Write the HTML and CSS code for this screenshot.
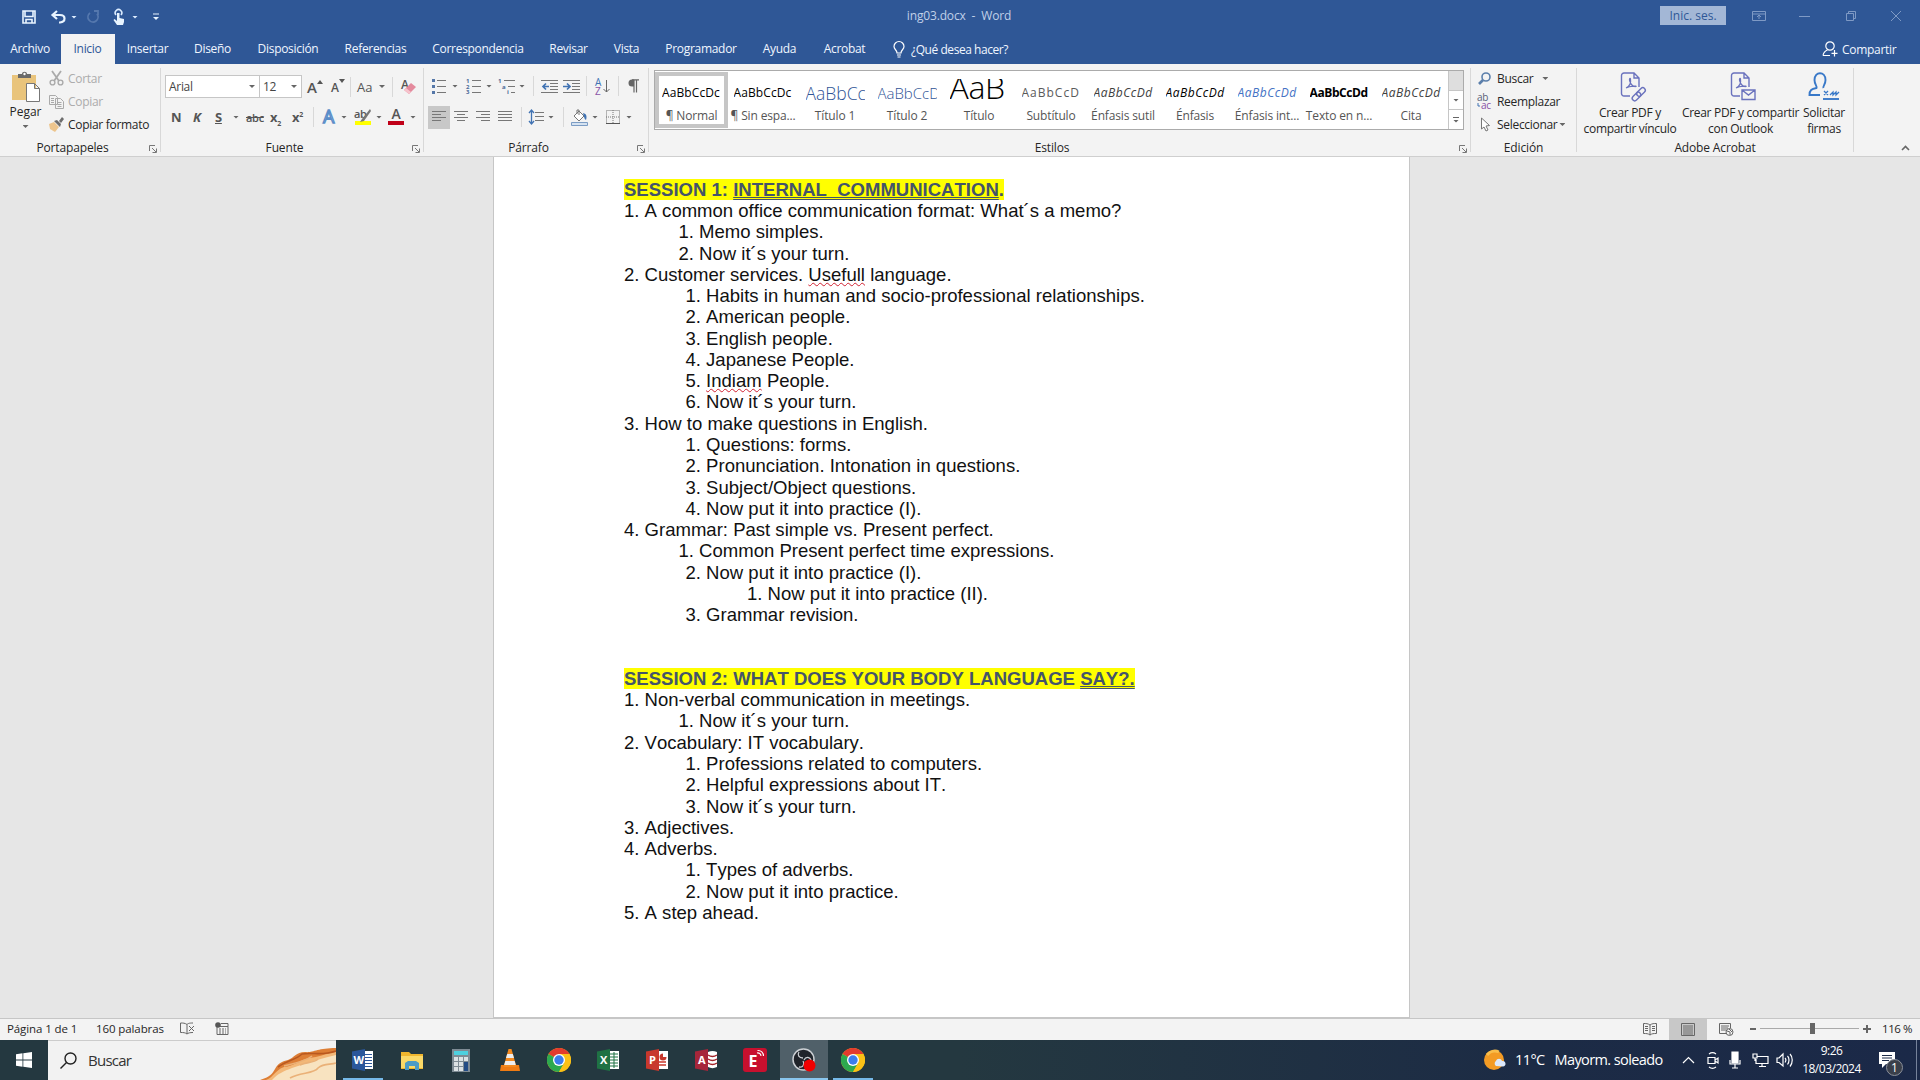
FILE: index.html
```html
<!DOCTYPE html>
<html lang="es">
<head>
    <meta charset="UTF-8">
    <meta name="viewport" content="width=device-width, initial-scale=1.0">
    <title>ing03.docx - Word</title>
    <link rel="stylesheet" href="styles.css">
</head>
<body>
    <svg class="defs" width="0" height="0">
        <symbol id="launcher" viewBox="0 0 8 8"><path d="M.5 6V.5H6M3 3l4 4M7.500 3.500v4h-4" fill="none" stroke="#777"/></symbol>
        <symbol id="chrome" viewBox="0 0 24 24">
            <circle cx="12" cy="12" r="12" fill="#fbc116"/>
            <path d="M12 12L1.600 6A12 12 0 0 1 22.400 6z" fill="#e33b2e"/>
            <path d="M12 12L1.600 6A12 12 0 0 0 12 24l5.200-9z" fill="#2da94f"/>
            <path d="M12 6h10.400A12 12 0 0 1 12 24l5.200-9z" fill="#fbc116"/>
            <circle cx="12" cy="12" r="6" fill="#fff"/><circle cx="12" cy="12" r="4.700" fill="#3b7ded"/>
        </symbol>
        <symbol id="pdf" viewBox="0 0 26 29">
            <path d="M10 24H4a2.500 2.500 0 0 1-2.500-2.500v-18A2.500 2.500 0 0 1 4 1h10l5 5v9M14 1v5h5" fill="none" stroke="#6a72bd" stroke-width="1.400"/>
            <path d="M6 16c4-2 5-6 4.500-9-.5-1.500-1.500 0-.8 2 1.300 4 3.300 6 6.300 5.500 1-.6-5-1-10 1.500z" fill="none" stroke="#6a72bd" stroke-width="1.200"/>
        </symbol>
    </svg>

    <header class="titlebar">
        <div class="quick">
            <svg width="14" height="14" viewBox="0 0 14 14"><path d="M1 1h12v12H1zM3 1.500v5h8v-5M4 13V9.500h6V13" fill="none" stroke="#e8f4ff" stroke-width="1.600"/></svg>
            <svg width="15" height="14" viewBox="0 0 15 14"><path d="M6 1L1.500 5 6 9M2 5h7c6 0 6 7 0 7.500H8" fill="none" stroke="#e8f4ff" stroke-width="2.200"/></svg>
            <i class="caret"></i>
            <svg width="14" height="14" viewBox="0 0 14 14"><path d="M4 3a5 5 0 1 0 7 1M8 1h4v4" fill="none" stroke="#5578ae" stroke-width="1.800"/></svg>
            <svg width="12" height="16" viewBox="0 0 12 16"><path d="M3 6a3.300 3.300 0 1 1 5 0" fill="none" stroke="#dcecff" stroke-width="1.500"/><path d="M4 4h2.500v5l4.500 1v3l-1 3H4L.500 11l1-1L4 12z" fill="#e8f4ff"/></svg>
            <i class="caret"></i>
            <svg width="6" height="8" viewBox="0 0 6 8"><path d="M0 1h6" stroke="#e8f4ff"/><path d="M0 4h6L3 7z" fill="#e8f4ff"/></svg>
        </div>
        <div class="doc-title">ing03.docx&nbsp; - &nbsp;Word</div>
        <div class="window-buttons">
            <button class="login">Inic. ses.</button>
            <svg width="14" height="12" viewBox="0 0 14 12"><path d="M.5 1.500h13v9H.5zM.5 4h13M7 9V5M5 7l2-2 2 2" /></svg>
            <svg width="12" height="12" viewBox="0 0 12 12"><path d="M0 6.500h11"/></svg>
            <svg width="12" height="12" viewBox="0 0 12 12"><path d="M1.500 3.500h7v7h-7zM3.500 3V1.500h7v7H9"/></svg>
            <svg width="12" height="12" viewBox="0 0 12 12"><path d="M1 1l10 10M11 1L1 11"/></svg>
        </div>
    </header>

    <nav class="tabs">
        <a>Archivo</a>
        <a class="active">Inicio</a>
        <a>Insertar</a>
        <a>Diseño</a>
        <a>Disposición</a>
        <a>Referencias</a>
        <a>Correspondencia</a>
        <a>Revisar</a>
        <a>Vista</a>
        <a>Programador</a>
        <a>Ayuda</a>
        <a>Acrobat</a>
        <div class="tell-me">
            <svg width="12" height="17" viewBox="0 0 12 17"><path d="M4 12c0-3-3-3.500-3-6.500a5 5 0 0 1 10 0c0 3-3 3.500-3 6.500zM4 14h4M4.500 16h3" fill="none" stroke="#fff" stroke-width="1.200"/></svg>
            <span>¿Qué desea hacer?</span>
        </div>
        <div class="share">
            <svg width="16" height="16" viewBox="0 0 16 16"><circle cx="8" cy="5" r="4.200"/><path d="M1 14.500c.5-3 2-4.500 4.500-5.500M1 14.500h7M12.500 9v6.500M9.500 12.300h6"/></svg>
            <span>Compartir</span>
        </div>
    </nav>

    <section class="ribbon">
        <div class="group clipboard">
            <div class="group-body">
                <div class="paste">
                    <svg width="30" height="31" viewBox="0 0 30 31"><path d="M1 4h24v25H1z" fill="#e9c47c"/><path d="M7 7V3h4c0-3 5-3 5 0h4v4z" fill="#6a6a6a"/><circle cx="13.500" cy="3" r="1.200" fill="#fff"/><path d="M15.500 12.500h8l5 5v13h-13zM23.500 12.500v5h5" fill="#fff" stroke="#777"/></svg>
                    <span>Pegar</span>
                    <i class="caret"></i>
                </div>
                <ul class="commands">
                    <li class="off"><svg width="15" height="15" viewBox="0 0 15 15"><path d="M3 0l7 10M12 0L5 10" stroke="#aaa" stroke-width="1.800"/><circle cx="3.500" cy="11.500" r="2.400" fill="none" stroke="#aaa" stroke-width="1.400"/><circle cx="11.500" cy="11.500" r="2.400" fill="none" stroke="#aaa" stroke-width="1.400"/></svg><span>Cortar</span></li>
                    <li class="off"><svg width="15" height="15" viewBox="0 0 15 15"><path d="M.5 1.500h6l2 2v7h-8zM6.500 4.500h5l3 3v7h-8zM2 4.500h3M2 6.500h3M2 8.500h3M8.500 8.500h4M8.500 10.500h4M8.500 12.500h4" fill="#f3f3f3" stroke="#aaa"/></svg><span>Copiar</span></li>
                    <li><svg width="15" height="15" viewBox="0 0 15 15"><path d="M0 7l5-2 5 5-4 5-5-3z" fill="#edc58d"/><path d="M5 4l3-1 4 4-1 3zM10 4l3-4 2 2-3 4z" fill="#6d6d6d"/></svg><span>Copiar formato</span></li>
                </ul>
            </div>
            <div class="group-label">Portapapeles<svg width="8" height="8"><use href="#launcher"/></svg></div>
        </div>

        <div class="group font">
            <div class="group-body">
                <div class="tools font-top">
                    <div class="combo">Arial<i class="caret"></i></div>
                    <div class="combo">12<i class="caret"></i></div>
                    <b class="grow">A<svg width="6" height="4"><path d="M0 4h6L3 0z"/></svg></b>
                    <b class="grow shrink">A<svg width="6" height="4"><path d="M0 0h6L3 4z"/></svg></b>
                    <i class="sep"></i>
                    <span class="case">Aa</span><i class="caret"></i>
                    <i class="sep"></i>
                    <svg width="16" height="16" viewBox="0 0 16 16"><text x="0" y="10" class="letter" font-size="12">A</text><path d="M3 11l7-7 5 4-7 7z" fill="#e48a9d"/><path d="M3 11l2-2 5 4-2 2z" fill="#f6c3cc"/></svg>
                </div>
                <div class="tools font-bottom">
                    <b>N</b><b class="italic">K</b><b class="underlined">S</b><i class="caret"></i>
                    <span class="strike">abc</span>
                    <b>x<sub>2</sub></b><b>x<sup>2</sup></b>
                    <i class="sep"></i>
                    <svg width="15" height="16" viewBox="0 0 15 16"><text x="1" y="14" font-size="18" fill="#fff" stroke="#5b8dc8" stroke-width="1.300">A</text></svg><i class="caret"></i>
                    <svg width="18" height="18" viewBox="0 0 18 18"><path d="M1 13h16v4H1z" fill="#ff0"/><text x="0" y="10" class="letter" font-size="11">ab</text><path d="M16 1L8 11l-2 3 4-1 7-10z" fill="#777"/></svg><i class="caret"></i>
                    <svg width="17" height="18" viewBox="0 0 17 18"><path d="M0 13h16v4H0z" fill="#c00018"/><text x="3.500" y="11" class="letter" font-size="14">A</text></svg><i class="caret"></i>
                </div>
            </div>
            <div class="group-label">Fuente<svg width="8" height="8"><use href="#launcher"/></svg></div>
        </div>

        <div class="group paragraph">
            <div class="group-body">
                <div class="tools para-top">
                    <svg width="14" height="16" viewBox="0 0 14 16"><path d="M5 2.500h9M5 8.500h9M5 14.500h9" class="line"/><path d="M0 1h3v3H0zM0 7h3v3H0zM0 13h3v3H0z" fill="#5577a8"/></svg><i class="caret"></i>
                    <svg width="15" height="16" viewBox="0 0 15 16"><path d="M6 2.500h9M6 8.500h9M6 14.500h9" class="line"/><g class="nums"><text y="5">1</text><text y="10.500">2</text><text y="16">3</text></g></svg><i class="caret"></i>
                    <svg width="17" height="16" viewBox="0 0 17 16"><path d="M6 2.500h11M10 8.500h7M13 14.500h4" class="line"/><g class="nums"><text y="5">1</text><text x="4" y="10.500">a</text><text x="9" y="16">i</text></g></svg><i class="caret"></i>
                    <i class="sep"></i>
                    <svg width="17" height="14" viewBox="0 0 17 14"><path d="M0 1.500h17M9 4.500h8M9 7.500h8M9 10.500h8M0 13.500h17" class="line"/><path d="M8 7.500H2M5 4.500l-3 3 3 3" stroke="#4173b3" stroke-width="1.700" fill="none"/></svg>
                    <svg width="17" height="14" viewBox="0 0 17 14"><path d="M0 1.500h17M9 4.500h8M9 7.500h8M9 10.500h8M0 13.500h17" class="line"/><path d="M0 7.500h6M4 4.500l3 3-3 3" stroke="#4173b3" stroke-width="1.700" fill="none"/></svg>
                    <i class="sep"></i>
                    <svg width="15" height="17" viewBox="0 0 15 17"><text x="0" y="8" font-size="10" fill="#4173b3">A</text><text x="0" y="17" font-size="10" fill="#8a55a8">Z</text><path d="M11.500 2v12M8.500 11l3 3 3-3" fill="none" stroke="#666"/></svg>
                    <i class="sep"></i>
                    <svg width="11" height="14" viewBox="0 0 11 14"><path d="M6 13.500V1M8.500 13.500V1M4 .800h7" stroke="#666" stroke-width="1.200"/><path d="M6 .500H4a3.500 3.500 0 0 0 0 7h2z" fill="#666"/></svg>
                </div>
                <div class="tools para-bottom">
                    <span class="pressed"><svg width="15" height="14" viewBox="0 0 15 14"><path d="M0 1.500h14M0 4.500h9M0 7.500h14M0 10.500h9" class="line"/></svg></span>
                    <svg width="15" height="14" viewBox="0 0 15 14"><path d="M0 1.500h14M3 4.500h8M0 7.500h14M3 10.500h8" class="line"/></svg>
                    <svg width="15" height="14" viewBox="0 0 15 14"><path d="M0 1.500h14M5 4.500h9M0 7.500h14M5 10.500h9" class="line"/></svg>
                    <svg width="15" height="14" viewBox="0 0 15 14"><path d="M0 1.500h14M0 4.500h14M0 7.500h14M0 10.500h14" class="line"/></svg>
                    <i class="sep"></i>
                    <svg width="15" height="16" viewBox="0 0 15 16"><path d="M6 3.500h9M6 7.500h9M6 11.500h9" class="line"/><path d="M2.500 1v14M0 4l2.500-3L5 4M0 12l2.500 3L5 12" stroke="#4173b3" fill="none" stroke-width="1.300"/></svg><i class="caret"></i>
                    <i class="sep"></i>
                    <svg width="17" height="17" viewBox="0 0 17 17"><path d="M3 7l5-5 5 5-5 5zM6 5V1h2v5" fill="#fff" stroke="#777"/><path d="M12 4c4 1 4 4 3 7-2-1-2-4-3-7z" fill="#4173b3"/><path d="M.5 13.500h16v3H.5z" fill="#d5e2f0" stroke="#7b9cc4"/></svg><i class="caret"></i>
                    <svg width="14" height="14" viewBox="0 0 14 14"><path d="M.5.5h13v13H.5zM7 0v14M0 7h14" fill="none" stroke="#777" stroke-dasharray="1 1"/><path d="M0 13.500h14" stroke="#555"/></svg><i class="caret"></i>
                </div>
            </div>
            <div class="group-label">Párrafo<svg width="8" height="8"><use href="#launcher"/></svg></div>
        </div>

        <div class="group styles">
            <div class="group-body">
                <div class="gallery">
                    <div class="style selected"><div class="preview">AaBbCcDc</div><span>¶ Normal</span></div>
                    <div class="style"><div class="preview">AaBbCcDc</div><span>¶ Sin espa...</span></div>
                    <div class="style"><div class="preview heading1">AaBbCc</div><span>Título 1</span></div>
                    <div class="style"><div class="preview heading2">AaBbCcD</div><span>Título 2</span></div>
                    <div class="style"><div class="preview title">AaB</div><span>Título</span></div>
                    <div class="style"><div class="preview subtitle">AaBbCcD</div><span>Subtítulo</span></div>
                    <div class="style"><div class="preview subtle">AaBbCcDd</div><span>Énfasis sutil</span></div>
                    <div class="style"><div class="preview emphasis">AaBbCcDd</div><span>Énfasis</span></div>
                    <div class="style"><div class="preview intense">AaBbCcDd</div><span>Énfasis int...</span></div>
                    <div class="style"><div class="preview strong">AaBbCcDd</div><span>Texto en n...</span></div>
                    <div class="style"><div class="preview subtle">AaBbCcDd</div><span>Cita</span></div>
                    <div class="gallery-scroll"><div class="off"></div><div><i class="caret"></i></div><div class="more"><i class="caret"></i></div></div>
                </div>
            </div>
            <div class="group-label">Estilos<svg width="8" height="8"><use href="#launcher"/></svg></div>
        </div>

        <div class="group editing">
            <div class="group-body">
                <ul class="commands">
                    <li><svg width="16" height="14" viewBox="0 0 16 14"><circle cx="9" cy="5" r="4" fill="none" stroke="#5b7fab" stroke-width="1.600"/><path d="M6 8l-4 4" stroke="#5b7fab" stroke-width="2.600"/></svg><span>Buscar</span><i class="caret"></i></li>
                    <li><svg width="16" height="16" viewBox="0 0 16 16"><text x="0" y="7" font-size="10" fill="#5a5f78">ab</text><text x="4" y="15" font-size="10" fill="#8a4fa5">ac</text><path d="M1 9v3h2" fill="none" stroke="#4173b3"/></svg><span>Reemplazar</span></li>
                    <li><svg width="16" height="15" viewBox="0 0 16 15"><path d="M4.500 1v11l2.500-2 2 4 2-1-2-4 3.500-.5z" fill="#fff" stroke="#777"/></svg><span>Seleccionar</span><i class="caret near"></i></li>
                </ul>
            </div>
            <div class="group-label">Edición</div>
        </div>

        <div class="group acrobat">
            <div class="group-body">
                <div class="big shifted"><svg width="26" height="29" viewBox="0 0 26 29"><use href="#pdf"/><g fill="none" stroke="#6a72bd" stroke-width="1.400"><rect x="16" y="17.500" width="10" height="5" rx="2.500" transform="rotate(-45 21 20)"/><rect x="11.500" y="22" width="10" height="5" rx="2.500" transform="rotate(-45 16.500 24.500)"/></g></svg><span>Crear PDF y<br>compartir vínculo</span></div>
                <div class="big shifted"><svg width="26" height="29" viewBox="0 0 26 29"><use href="#pdf"/><path d="M12 18h13v9.500H12zM12 18l6.500 5 6.500-5" fill="#f3f3f3" stroke="#6a72bd" stroke-width="1.400"/></svg><span>Crear PDF y compartir<br>con Outlook</span></div>
                <div class="big"><svg width="32" height="29" viewBox="0 0 32 29"><path d="M12 23H1.500c0-5 2-6 7-7 1-2-2-3-2-8 0-9 11-9 11 0 0 5-3 6-2 8" fill="none" stroke="#3878c8" stroke-width="1.900"/><path d="M16 19l4 4M20 19l-4 4M22 23l3-3v3l3-3v3l3-3" fill="none" stroke="#3878c8" stroke-width="1.300"/><path d="M15 27h16" stroke="#3878c8" stroke-width="1.900"/></svg><span>Solicitar<br>firmas</span></div>
            </div>
            <div class="group-label">Adobe Acrobat</div>
        </div>
        <svg class="collapse" width="9" height="6" viewBox="0 0 9 6"><path d="M1 5l3.500-3.500L8 5" fill="none" stroke="#666" stroke-width="1.600"/></svg>
    </section>

    <main class="workspace">
        <article class="page">
            <h1>SESSION 1: <u>INTERNAL&nbsp; COMMUNICATION</u>.</h1>
            <p>1. A common office communication format: What´s a memo?</p>
            <p class="near">1. Memo simples.</p>
            <p class="near">2. Now it´s your turn.</p>
            <p>2. Customer services. <span class="typo">Usefull</span> language.</p>
            <p class="sub">1. Habits in human and socio-professional relationships.</p>
            <p class="sub">2. American people.</p>
            <p class="sub">3. English people.</p>
            <p class="sub">4. Japanese People.</p>
            <p class="sub">5. <span class="typo">Indiam</span> People.</p>
            <p class="sub">6. Now it´s your turn.</p>
            <p>3. How to make questions in English.</p>
            <p class="sub">1. Questions: forms.</p>
            <p class="sub">2. Pronunciation. Intonation in questions.</p>
            <p class="sub">3. Subject/Object questions.</p>
            <p class="sub">4. Now put it into practice (I).</p>
            <p>4. Grammar: Past simple vs. Present perfect.</p>
            <p class="near">1. Common Present perfect time expressions.</p>
            <p class="sub">2. Now put it into practice (I).</p>
            <p class="deep">1. Now put it into practice (II).</p>
            <p class="sub">3. Grammar revision.</p>
            <p>&nbsp;</p>
            <p>&nbsp;</p>
            <h1>SESSION 2: WHAT DOES YOUR BODY LANGUAGE <u>SAY?.</u></h1>
            <p>1. Non-verbal communication in meetings.</p>
            <p class="near">1. Now it´s your turn.</p>
            <p>2. Vocabulary: IT vocabulary.</p>
            <p class="sub">1. Professions related to computers.</p>
            <p class="sub">2. Helpful expressions about IT.</p>
            <p class="sub">3. Now it´s your turn.</p>
            <p>3. Adjectives.</p>
            <p>4. Adverbs.</p>
            <p class="sub">1. Types of adverbs.</p>
            <p class="sub">2. Now put it into practice.</p>
            <p>5. A step ahead.</p>
        </article>
    </main>

    <footer class="statusbar">
        <span class="pages">Página 1 de 1</span>
        <span class="words">160 palabras</span>
        <svg width="15" height="13" viewBox="0 0 15 13"><path d="M7 2.500C5 1 3 1 .500 1v9.500c3 0 4.500 0 6.500 1.500V2.500C8 1.500 9 1 13 1M7 12c1-1 3-1.500 6-1.500M9 4l5 5M14 4L9 9" fill="none" stroke="#666"/></svg>
        <svg width="14" height="13" viewBox="0 0 14 13"><path d="M2 4.500h11v8H2zM6 1.500h7v3" fill="none" stroke="#666"/><circle cx="3" cy="3" r="2.800" fill="#555"/><path d="M4 7h7M4 9h7M4 11h7" stroke="#666" stroke-dasharray="2 1"/></svg>
        <div class="views">
            <span><svg width="14" height="13" viewBox="0 0 14 13"><path d="M7 2C5 .500 3 .500.500.500v10c3 0 4.500 0 6.500 1.500 2-1.500 3.500-1.500 6.500-1.500v-10C11 .500 9 .500 7 2zv10M2 3.500h3M2 5.500h3M2 7.500h3M9 3.500h3M9 5.500h3M9 7.500h3" fill="none" stroke="#666"/></svg></span>
            <span class="pressed"><svg width="14" height="13" viewBox="0 0 14 13"><path d="M.5.5h13v12H.5zM2 3h10M2 5h10M2 7h10M2 9h10M2 11h10" fill="none" stroke="#666"/></svg></span>
            <span><svg width="15" height="13" viewBox="0 0 15 13"><path d="M7 10.500H.500v-10h11v5M2 3h8M2 5h7M2 7h5" fill="none" stroke="#666"/><circle cx="10.500" cy="9" r="3.500" fill="#f3f3f3" stroke="#666"/><path d="M8 8l3 1v3M10 6l3 3" stroke="#666" fill="none"/></svg></span>
        </div>
        <div class="zoom"><i class="minus"></i><div class="track"><i></i></div><i class="plus"></i></div>
        <span class="percent">116 %</span>
    </footer>

    <div class="taskbar">
        <div class="start"><svg width="16" height="16" viewBox="0 0 16 16"><path d="M0 2.200l6.500-.9v6.300H0zM7.300 1.200L16 0v7.600H7.300zM0 8.400h6.500v6.300L0 13.800zM7.300 8.400H16V16l-8.700-1.200z" fill="#fff"/></svg></div>
        <div class="search">
            <svg width="17" height="17" viewBox="0 0 17 17"><circle cx="10.500" cy="6.500" r="5.500" fill="none" stroke="#222" stroke-width="1.400"/><path d="M6.500 10.500L.500 16.500" stroke="#222" stroke-width="1.400"/></svg>
            <span>Buscar</span>
            <svg class="pastry" width="80" height="39" viewBox="0 0 80 39">
                <path d="M4 39c10-3 12-6 15-11 3-6 8-8 13-9 6-2 8-8 17-8 8 1 12-4 31-4v32z" fill="#dd7e35"/>
                <path d="M10 39c8-3 9-10 18-13 10-1 16-7 25-9 10-1 15-4 27-6v28z" fill="#f3b878"/>
                <path d="M16 39c5-6 12-9 20-12 12-4 24-8 44-13v25z" fill="#f8e3c0"/>
                <path d="M22 26c9-7 18-7 24-13 10-2 20 2 34-3" fill="none" stroke="#b9581f" stroke-width="1.600"/>
                <path d="M34 37c10-6 24-4 28-10 6-5 12-3 18-5M44 24c6-3 14-2 18-6M28 25c12-3 22-5 28-10" fill="none" stroke="#eab178" stroke-width="1.600"/>
            </svg>
        </div>
        <div class="apps">
            <div class="open"><svg width="22" height="22" viewBox="0 0 22 22"><path d="M12 2h9v18h-9z" fill="#fff"/><path d="M13 5.500h7M13 8.500h7M13 11.500h7M13 14.500h7M13 17.500h7" stroke="#2b579a"/><path d="M0 2.500L13 0v22L0 19.500z" fill="#2b579a"/><text x="1.500" y="15" font-size="11">W</text></svg></div>
            <div><svg width="22" height="20" viewBox="0 0 22 20"><path d="M0 2h8l2 2h12v15H0z" fill="#f0b62e"/><path d="M0 6h22v12H0z" fill="#fbd968"/><path d="M4 20v-7l3-2h8l3 2v7h-4v-4H8v4z" fill="#4c9bc6"/></svg></div>
            <div><svg width="18" height="23" viewBox="0 0 18 23"><path d="M0 0h18v23H0z" fill="#7e8b94"/><path d="M2 2h14v4H2z" fill="#4ed0df"/><path d="M2 8h4v4H2zM7 8h4v4H7zM12 8h4v4h-4zM2 13h4v4H2zM7 13h4v4H7zM2 18h4v4H2zM7 18h4v4H7z" fill="#dce2e5"/><path d="M12 13h4v9h-4z" fill="#234c85"/></svg></div>
            <div><svg width="20" height="22" viewBox="0 0 20 22"><path d="M1 16h18l1 6H0z" fill="#ef7b13"/><path d="M8.500 0h3l5 18h-13z" fill="#f58a1f"/><path d="M7.200 5h5.600l1.200 4H6zM5.300 12h9.400l1 4H4.200z" fill="#eee"/></svg></div>
            <div><svg width="24" height="24"><use href="#chrome"/></svg></div>
            <div><svg width="23" height="22" viewBox="0 0 23 22"><path d="M12 2h10v18H12z" fill="#fff"/><path d="M13 5h8M13 8h8M13 11h8M13 14h8M13 17h8M17 3v16" stroke="#1f7244"/><path d="M0 2.500L13 0v22L0 19.500z" fill="#1f7244"/><text x="3" y="15" font-size="11">X</text></svg></div>
            <div><svg width="23" height="22" viewBox="0 0 23 22"><path d="M12 2h10v18H12z" fill="#fff"/><path d="M13 13h7M13 16h7" stroke="#c8382d" stroke-width="1.500"/><circle cx="17" cy="8" r="3.500" fill="#c8382d"/><path d="M17 8V4h4v4z" fill="#fff"/><path d="M0 2.500L13 0v22L0 19.500z" fill="#c8382d"/><text x="3" y="15" font-size="11">P</text></svg></div>
            <div><svg width="23" height="22" viewBox="0 0 23 22"><path d="M13 3c3-1.500 6-1.500 9 0v15c-3 1.500-6 1.500-9 0z" fill="#fff"/><path d="M13 6c3 2 6 2 9 0M13 10c3 2 6 2 9 0M13 14c3 2 6 2 9 0" stroke="#a4262c" stroke-width="1.500" fill="none"/><path d="M0 2.500L13 0v22L0 19.500z" fill="#a6263a"/><text x="3" y="15" font-size="11">A</text></svg></div>
            <div><svg width="24" height="24" viewBox="0 0 24 24"><rect width="24" height="24" rx="3" fill="#c8102e"/><text x="5.500" y="19" font-size="16">E</text><path d="M14 5c2-.5 4 1 4 3M14.500 2.500C18 2 20.500 5 20.500 8" fill="none" stroke="#fff" stroke-width="1.100"/></svg></div>
            <div class="open current"><svg width="24" height="24" viewBox="0 0 24 24"><circle cx="11.500" cy="11.500" r="10.500" fill="#20242a" stroke="#ccd0d4" stroke-width="1.500"/><path d="M11 10c-4 0-6-3-4-6M12 12c2-4 6-3 7 0M11 13c2 3 0 7-4 6" fill="none" stroke="#ccd0d4" stroke-width="1.300"/><circle cx="17.500" cy="17.500" r="6" fill="#f00000"/></svg></div>
            <div class="open"><svg width="24" height="24"><use href="#chrome"/></svg></div>
        </div>
        <div class="weather">
            <svg width="22" height="21" viewBox="0 0 22 21"><circle cx="10" cy="10" r="10" fill="#f39b24"/><path d="M3 5a10 10 0 0 1 12-3" stroke="#f9bd4a" stroke-width="3" fill="none"/><path d="M12 16a3 3 0 0 1 0-5c1-3 5-3 6 0 4-1 5 5 1 5.500z" fill="#dce9fb"/></svg>
            <span class="degrees">11°C</span><span>Mayorm. soleado</span>
        </div>
        <div class="tray">
            <svg width="13" height="8" viewBox="0 0 13 8"><path d="M1 7l5.500-5.500L12 7"/></svg>
            <svg width="12" height="17" viewBox="0 0 12 17"><path d="M1 5.500h7v6H1zM8 8l3-2v5L8 9M2 2c2-1.500 5-1.500 7 0M2 15c2 1.500 5 1.500 7 0"/></svg>
            <svg width="12" height="17" viewBox="0 0 12 17"><path d="M3 0h6v11H3z" fill="#fff"/><path d="M1 8v4h10V8M6 12v4M3 16h6"/></svg>
            <svg width="17" height="15" viewBox="0 0 17 15"><path d="M5 3.500h11v7H4V6M10 10v4M7 13.500h7M1 1h4v4H1zM3 5v3"/></svg>
            <svg width="17" height="15" viewBox="0 0 17 15"><path d="M1 5h2l4-4v12L3 9.500H1zM9 5c1 1 1 3 0 4.500M11.500 3c2 2 2 6 0 8.500M14 1c3 3 3 9 0 12.500"/></svg>
        </div>
        <div class="clock"><span>9:26</span><span>18/03/2024</span></div>
        <div class="notifications">
            <svg width="16" height="16" viewBox="0 0 16 16"><path d="M0 0h16v12H7l-4 4v-4H0z" fill="#fff"/><path d="M3 3.500h10M3 6h10M3 8.500h7" stroke="#1c2b48"/></svg>
            <span class="badge">1</span>
        </div>
    </div>
</body>
</html>
```

FILE: styles.css
```css
/* styles.css */

* {
    box-sizing: border-box;
    margin: 0;
    padding: 0;
}

body {
    width: 1920px;
    height: 1080px;
    overflow: hidden;
    display: flex;
    flex-direction: column;
    font-family: "Open Sans", "Noto Sans", sans-serif;
    font-size: 12px;
    letter-spacing: -0.3px;
    color: #262626;
    background: #e6e6e6;
}

svg {
    display: block;
    flex: none;
    overflow: visible;
}

.defs { position: absolute; }

.caret {
    display: block;
    flex: none;
    width: 6px;
    height: 3px;
    background: #666;
    clip-path: polygon(0 0, 100% 0, 50% 100%);
}

/* Title bar */

.titlebar {
    height: 34px;
    flex: none;
    display: grid;
    grid-template-columns: 660px 598px 1fr;
    align-items: center;
    background: #2f5796;
    color: #c0d0e8;
}

.quick {
    display: grid;
    grid-template-columns: 29px 20px 15px 27px 19px 21px 6px;
    align-items: center;
    padding-left: 22px;
}

.quick .caret { background: #dcecff; }

.doc-title {
    text-align: center;
    font-size: 12px;
    letter-spacing: -0.15px;
    padding-bottom: 3px;
}

.window-buttons {
    display: grid;
    grid-template-columns: 92px 47px 46px 45px 12px;
    align-items: center;
    padding-left: 402px;
    padding-bottom: 3px;
}

.window-buttons svg {
    fill: none;
    stroke: #7f9ac5;
}

.login {
    width: 66px;
    height: 19px;
    border: none;
    background: #a3b7d6;
    color: #2f5796;
    font: inherit;
    letter-spacing: 0;
}

/* Tabs */

.tabs {
    height: 30px;
    flex: none;
    display: grid;
    grid-template-columns: 61px 54px 66px 64px 87px 88px 117px 64px 52px 97px 60px 70px 943px 1fr;
    background: #2f5796;
    color: #f0f6ff;
    line-height: 29px;
    text-align: center;
}

.tabs a { padding-right: 1px; }

.tabs .active {
    background: #f3f3f3;
    color: #2f5796;
}

.tell-me, .share {
    display: flex;
    align-items: center;
    gap: 6px;
    padding-left: 13px;
}

.tell-me span { letter-spacing: -0.45px; }

.share {
    gap: 4px;
    padding-left: 0;
    margin-left: -1px;
}

.share svg {
    fill: none;
    stroke: #fff;
    stroke-width: 1.200;
}

/* Ribbon */

.ribbon {
    height: 93px;
    flex: none;
    display: flex;
    padding-top: 4px;
    background: #f3f3f3;
    border-bottom: 1px solid #cfcfcf;
}

.group {
    height: 84px;
    border-right: 1px solid #d8d8d8;
    display: flex;
    flex-direction: column;
}

.clipboard { width: 161px; }
.font { width: 263px; }
.paragraph { width: 225px; }
.styles { width: 822px; }
.editing { width: 106px; }
.acrobat { width: 277px; }

.group-body {
    height: 71px;
    flex: none;
}

.group-label {
    display: grid;
    grid-template-columns: 1fr 8px;
    column-gap: 4px;
    height: 18px;
    padding-right: 3px;
    line-height: 18px;
    text-align: center;
    letter-spacing: -0.15px;
}

.group-label svg { margin-top: 6px; }

.clipboard .group-body { display: flex; }

.paste {
    width: 49px;
    display: flex;
    flex-direction: column;
    align-items: center;
    padding-top: 3px;
    padding-left: 2px;
}

.paste span { margin-top: 1px; letter-spacing: 0; }
.paste .caret { margin-top: 5px; }

.commands {
    list-style: none;
    margin-top: -1px;
}

.commands li {
    height: 23px;
    display: flex;
    align-items: center;
    gap: 4px;
}

.commands .off { color: #acacac; }

.tools {
    display: grid;
    align-items: center;
    color: #555;
}

.tools sub, .tools sup { font-size: 7px; line-height: 0; }

.font-top {
    grid-template-columns: 95px 47px 24px 19px 7px 22px 13px 9px 16px;
    height: 22px;
    margin: 7px 0 0 4px;
}

.font-bottom {
    grid-template-columns: 22px 22px 18px 13px 24px 22px 21px 9px 19px 13px 22px 12px 22px 6px;
    height: 24px;
    margin: 8px 0 0 10px;
    font-size: 13px;
}

.combo {
    height: 23px;
    display: flex;
    align-items: center;
    justify-content: space-between;
    padding: 0 4px 0 3px;
    border: 1px solid #c6c6c6;
    background: #fff;
    color: #444;
}

.combo + .combo { width: 43px; margin-left: -1px; }

.grow { display: flex; font-size: 15px; font-weight: 600; }
.grow svg { margin-top: 3px; fill: #555; }
.shrink { font-size: 12px; padding-top: 2px; }
.shrink svg { margin-top: 0; }
.case { font-size: 13px; letter-spacing: 0; }
.italic { font-style: italic; }
.underlined { text-decoration: underline; }
.strike { text-decoration: line-through; font-size: 11px; font-weight: 600; }
.letter { fill: #555; font-weight: 600; }

.sep {
    width: 1px;
    height: 20px;
    background: #d8d8d8;
}

.line { stroke: #777; fill: none; }
.nums { font-size: 6px; font-weight: 700; fill: #4a6a99; }

.para-top {
    grid-template-columns: 20px 14px 20px 12px 21px 14px 8px 22px 23px 9px 23px 10px 11px;
    height: 22px;
    margin: 7px 0 0 8px;
}

.para-bottom {
    grid-template-columns: 26px 22px 22px 23px 8px 19px 15px 8px 21px 14px 20px 7px;
    height: 24px;
    margin: 8px 0 0 4px;
}

.pressed {
    display: flex;
    align-items: center;
    background: #c8c8c8;
}

.tools .pressed {
    width: 22px;
    height: 23px;
    padding-left: 4px;
}

/* Styles gallery */

.gallery {
    display: flex;
    width: 810px;
    height: 60px;
    margin: 2px 0 0 5px;
    padding: 1px 0;
    background: #fff;
    border: 1px solid #ababab;
}

.style {
    width: 72px;
    flex: none;
    display: flex;
    flex-direction: column;
    align-items: center;
    padding-top: 7px;
    color: #555;
    white-space: nowrap;
}

.selected {
    width: 73px;
    margin-right: -1px;
    padding-top: 3px;
    border: 4px solid #c6c6c6;
}

.preview {
    width: 59px;
    height: 28px;
    flex: none;
    line-height: 28px;
    overflow: hidden;
    color: #000;
    letter-spacing: 0.1px;
}

.style span { line-height: 18px; letter-spacing: -0.15px; }
.heading1 { font-size: 17.5px; font-weight: 300; color: #2f5496; letter-spacing: 0; }
.heading2 { font-size: 15px; font-weight: 300; color: #2f5496; letter-spacing: 0; }
.title { font-size: 32px; font-weight: 300; line-height: 15px; letter-spacing: -0.3px; }
.subtitle { color: #5a5a5a; letter-spacing: 1px; }
.subtle { font-style: italic; color: #404040; letter-spacing: 0.5px; }
.emphasis { font-style: italic; letter-spacing: 0.5px; }
.intense { font-style: italic; color: #4472c4; letter-spacing: 0.5px; }
.strong { font-weight: 700; letter-spacing: -0.4px; }

.gallery-scroll {
    width: 16px;
    margin: -1px 0 -1px 1px;
    display: grid;
    grid-template-rows: 20px 19px 19px;
    border-left: 1px solid #c6c6c6;
}

.gallery-scroll div {
    display: flex;
    align-items: center;
    justify-content: center;
    border-bottom: 1px solid #c6c6c6;
}

.gallery-scroll .off { background: #dedede; }
.gallery-scroll .more { flex-direction: column; gap: 2px; border: none; }
.gallery-scroll .more::before { content: ""; width: 6px; height: 1px; background: #666; }

.editing .group-body { padding-left: 6px; }
.editing .commands .caret { margin-left: 5px; }
.editing .commands .near { margin-left: -2px; }
.editing .group-label, .acrobat .group-label { grid-template-columns: 1fr; padding-right: 0; }

.acrobat .group-body {
    display: grid;
    grid-template-columns: 106px 115px 52px;
    text-align: center;
    line-height: 16px;
    white-space: nowrap;
}

.big {
    display: flex;
    flex-direction: column;
    align-items: center;
    gap: 4px;
    padding-top: 4px;
}

.shifted svg { margin-left: 5px; }

.collapse { margin: 77px 0 0 47px; }

/* Document */

.workspace {
    height: 861px;
    flex: none;
    padding-left: 493px;
}

.page {
    width: 917px;
    height: 861px;
    padding: 21.8px 0 0 130px;
    background: #fff;
    border: 1px solid #c6c6c6;
    border-top: none;
    font-family: "Liberation Sans", Arial, sans-serif;
    font-size: 18.540px;
    font-kerning: none;
    line-height: 21.280px;
    letter-spacing: 0;
    color: #111;
    white-space: nowrap;
}

.page h1 {
    width: fit-content;
    background: #ff0;
    color: #44546a;
    font-size: inherit;
}

.page u { text-decoration: underline double; text-decoration-thickness: 1px; }
.page p { height: 21.280px; }
.page .near { padding-left: 54.500px; }
.page .sub { padding-left: 61.500px; }
.page .deep { padding-left: 123px; }

.typo {
    text-decoration: underline wavy #d02030 1px;
    text-decoration-skip-ink: none;
}

/* Status bar */

.statusbar {
    height: 22px;
    flex: none;
    display: grid;
    grid-template-columns: 89px 84px 35px 1416px 119px 132px 1fr;
    align-items: center;
    padding: 0 0 2px 7px;
    background: #f3f3f3;
    border-top: 1px solid #c6c6c6;
    font-size: 11.5px;
    letter-spacing: -0.1px;
    white-space: nowrap;
}

.views {
    display: grid;
    grid-template-columns: 38px 38px 38px;
    height: 21px;
    margin-bottom: -2px;
}

.views span {
    display: flex;
    align-items: center;
    justify-content: center;
    padding-bottom: 1px;
}

.zoom {
    display: flex;
    align-items: center;
    gap: 4px;
}

.minus {
    width: 6px;
    height: 2px;
    background: #666;
}

.track {
    width: 99px;
    height: 1px;
    background: #aaa;
    display: flex;
    align-items: center;
    padding-left: 50px;
}

.track i {
    width: 5px;
    height: 11px;
    flex: none;
    background: #666;
}

.plus {
    width: 8px;
    height: 8px;
    background: linear-gradient(#666, #666) center / 8px 2px no-repeat, linear-gradient(#666, #666) center / 2px 8px no-repeat;
}

.percent { letter-spacing: -0.4px; }

/* Taskbar */

.taskbar {
    height: 40px;
    flex: none;
    display: grid;
    grid-template-columns: 48px 288px 1148px 198px 112px 75px 1fr;
    background: linear-gradient(90deg, #243840, #243840 50%, #1c2b45 80%, #1b2948);
    color: #fff;
    letter-spacing: 0;
}

.start {
    display: flex;
    align-items: center;
    justify-content: center;
}

.search {
    display: flex;
    align-items: center;
    gap: 11px;
    padding-left: 12px;
    background: #f2f2f2;
    border-top: 1px solid #ccc;
    color: #333;
    font-size: 15px;
    letter-spacing: -0.75px;
}

.search span { padding-bottom: 1px; }

.pastry { margin-left: auto; }

.apps {
    display: flex;
    padding-left: 3px;
    gap: 1px;
}

.apps div {
    width: 48px;
    height: 40px;
    display: flex;
    align-items: center;
    justify-content: center;
}

.apps text { fill: #fff; font-weight: 700; }
.apps .open { background: linear-gradient(#76b9e8, #76b9e8) bottom / 40px 2px no-repeat; }
.apps .current { background: linear-gradient(#8ac6ee, #8ac6ee) bottom / 48px 2px no-repeat, #506069; }

.weather {
    display: flex;
    align-items: center;
    font-size: 14.5px;
    letter-spacing: -0.6px;
    white-space: nowrap;
}

.weather span { padding-bottom: 1px; }
.degrees { margin: 0 10px 0 9px; }

.tray {
    display: grid;
    grid-template-columns: 25px 22px 23px 24px 17px;
    align-items: center;
}

.tray svg { fill: none; stroke: #fff; stroke-width: 1.200; }

.clock {
    display: flex;
    flex-direction: column;
    justify-content: center;
    text-align: center;
    line-height: 18px;
    letter-spacing: -0.5px;
    padding-bottom: 1px;
}

.notifications {
    position: relative;
    margin-right: 3px;
    padding: 12px 0 0 10px;
    border-right: 1px solid #76829a;
}

.badge {
    position: absolute;
    left: 17px;
    top: 19px;
    width: 17px;
    height: 17px;
    border: 1px solid #8b909a;
    border-radius: 50%;
    background: #3a3f4a;
    line-height: 15px;
    text-align: center;
}
```
